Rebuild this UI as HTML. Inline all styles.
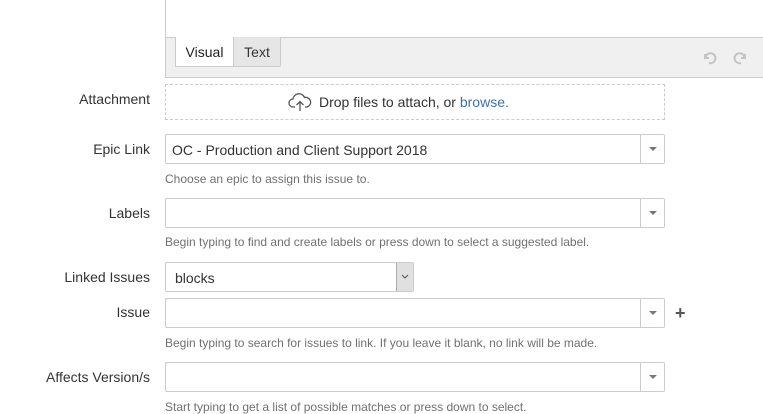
<!DOCTYPE html>
<html><head><style>
body{margin:0;width:763px;height:409px;overflow:hidden;background:#fff;font-family:"Liberation Sans",Arial,sans-serif;position:relative;color:#333}
.a{position:absolute}
.lbl{position:absolute;right:613px;font-size:14px;color:#333;white-space:nowrap}
.inp{position:absolute;left:165px;width:498px;height:28px;border:1px solid #ccc;border-radius:2px;background:#fff;font-size:14px;box-sizing:content-box}
.inp .arr{position:absolute;right:0;top:0;width:23px;height:28px;border-left:1px solid #ccc}
.inp .arr:after{content:"";position:absolute;left:8px;top:12px;border-left:4px solid transparent;border-right:4px solid transparent;border-top:4px solid #777}
.help{position:absolute;left:165px;font-size:12px;color:#707070;white-space:nowrap}
</style></head><body>
<div class="a" style="left:165px;top:-2px;width:610px;height:80px;border:1px solid #ccc;background:#f0f0f0;box-sizing:border-box"></div>
<div class="a" style="left:166px;top:-2px;width:600px;height:39px;background:#fff;border-bottom:1px solid #ccc"></div>
<div class="a" style="left:175px;top:37px;width:59px;height:30px;background:#fff;border:1px solid #ccc;border-top:none;box-sizing:border-box;font-size:14px;text-align:center;line-height:31px;color:#222">Visual</div>
<div class="a" style="left:234px;top:37px;width:47px;height:30px;background:#e6e6e6;border:1px solid #ccc;border-top:none;border-left:none;border-radius:0 0 2px 0;box-sizing:border-box;font-size:14px;text-align:center;line-height:31px;color:#333">Text</div>
<svg class="a" style="left:701px;top:50px" width="48" height="16" viewBox="0 0 48 16"><path d="M4 4v4h4M4.5 7.5A5 5 0 1 1 8 13" fill="none" stroke="#c4c4c4" stroke-width="2"/><path d="M44 4v4h-4M43.5 7.5A5 5 0 1 0 40 13" fill="none" stroke="#c4c4c4" stroke-width="2"/></svg>
<div class="lbl" style="top:91px">Attachment</div>
<div class="a" style="left:165px;top:84px;width:500px;height:36px;border:1px dashed #ccc;box-sizing:border-box"></div>
<svg class="a" style="left:288px;top:92px" width="24" height="20" viewBox="0 0 24 20"><path d="M7 15H5a4 4 0 0 1 0-8 6 6 0 0 1 11.5-1.5A4.5 4.5 0 0 1 19 15h-2" fill="none" stroke="#555" stroke-width="1.3"/><path d="M12 19V10M8.5 13 12 9.5 15.5 13" fill="none" stroke="#555" stroke-width="1.3"/></svg>
<div class="a" style="left:319px;top:94px;font-size:14px;color:#333">Drop files to attach, or <span style="color:#3b73af">browse.</span></div>
<div class="lbl" style="top:141px">Epic Link</div>
<div class="inp" style="top:134px"><span style="position:absolute;left:6px;top:7px">OC - Production and Client Support 2018</span><div class="arr"></div></div>
<div class="help" style="top:172px">Choose an epic to assign this issue to.</div>
<div class="lbl" style="top:205px">Labels</div>
<div class="inp" style="top:198px"><div class="arr"></div></div>
<div class="help" style="top:235px">Begin typing to find and create labels or press down to select a suggested label.</div>
<div class="lbl" style="top:269px">Linked Issues</div>
<div class="a" style="left:165px;top:262px;width:249px;height:30px;border:1px solid #ccc;border-radius:2px;box-sizing:border-box;font-size:14px"><span style="position:absolute;left:9px;top:7px">blocks</span><div style="position:absolute;right:0;top:0;width:16px;height:28px;background:#e0e0e0;border-left:1px solid #aaa"><svg width="16" height="28"><path d="M5 12l3 3 3-3" fill="none" stroke="#555" stroke-width="1"/></svg></div></div>
<div class="lbl" style="top:304px">Issue</div>
<div class="inp" style="top:298px"><div class="arr"></div></div>
<div class="a" style="left:675px;top:303px;font-size:18px;font-weight:bold;color:#555">+</div>
<div class="help" style="top:336px">Begin typing to search for issues to link. If you leave it blank, no link will be made.</div>
<div class="lbl" style="top:369px">Affects Version/s</div>
<div class="inp" style="top:362px"><div class="arr"></div></div>
<div class="help" style="top:400px">Start typing to get a list of possible matches or press down to select.</div>
</body></html>
